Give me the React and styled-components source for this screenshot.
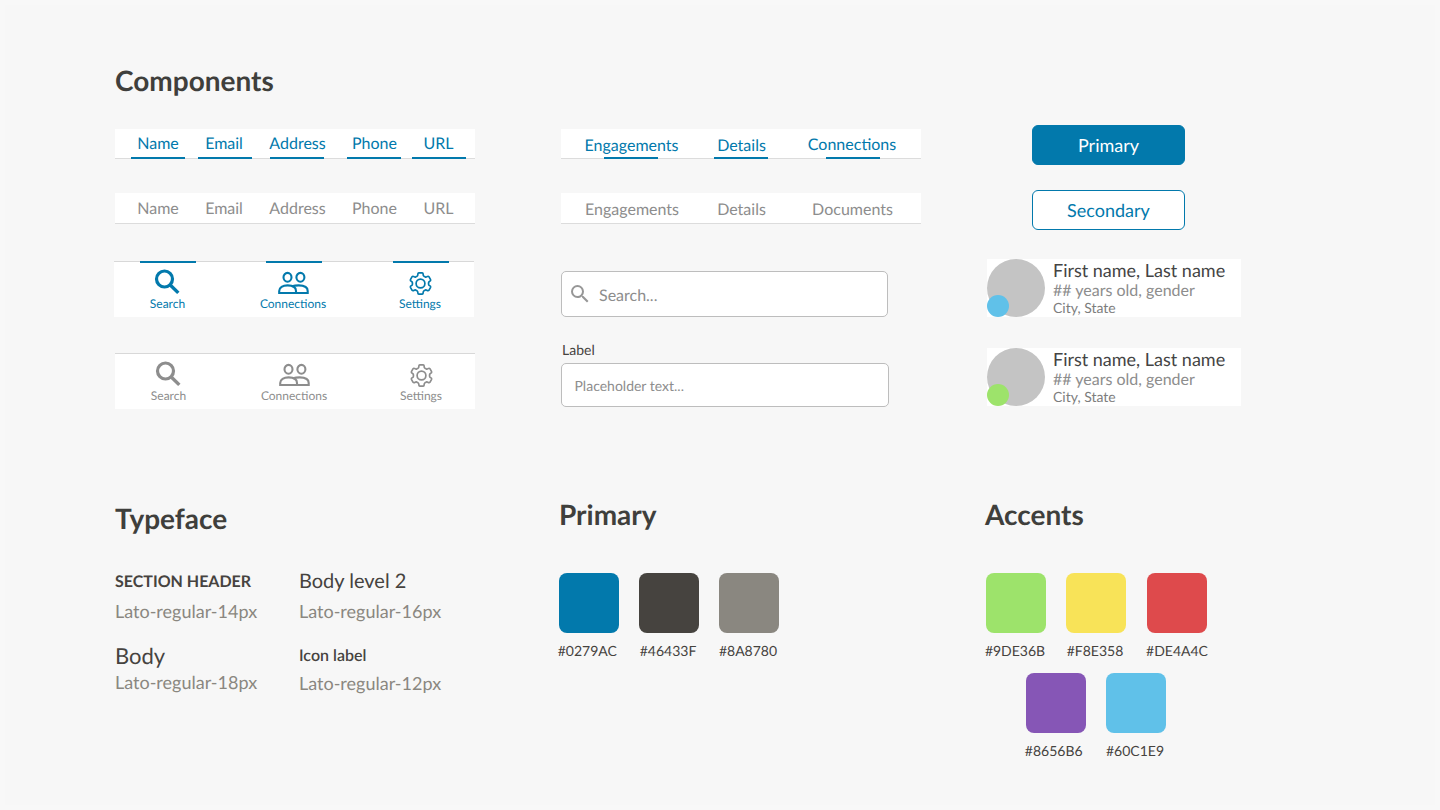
import React from 'react';
import styled, { createGlobalStyle } from 'styled-components';
import { MdSearch } from 'react-icons/md';

const BLUE = '#0279ac';
const DARK = '#46433f';
const INK = '#3f3f3c';
const WARM = '#8a8780';
const GREY = '#8d8d8d';

const Global = createGlobalStyle`
  *, *::before, *::after { box-sizing: border-box; }
  body {
    margin: 0;
    background: #f7f7f7;
    font-family: Lato, "Liberation Sans", sans-serif;
    text-rendering: geometricPrecision;
  }
`;

const Page = styled.main`
  width: 1440px;
  height: 810px;
  overflow: hidden;
  border: 5px solid #f8f8f8;
  background: #f7f7f7;
  padding: 57px 110px 0;
`;

const Heading = styled.h2`
  margin: 0 0 0 ${(p) => p.$outdent || 0}px;
  font-size: 28px;
  line-height: 36px;
  font-weight: 700;
  color: ${INK};
  white-space: nowrap;
  padding-top: ${(p) => p.$drop || 0}px;
`;

const Columns = styled.div`
  display: grid;
  grid-template-columns: 446px 426px 300px;
  align-items: start;
`;

const ComponentArea = styled(Columns)`
  height: 398px;
  padding-top: 27px;
`;

const Stack = styled.div`
  display: flex;
  flex-direction: column;
  align-items: flex-start;
  padding-top: ${(p) => p.$top || 0}px;
`;

const TabBar = styled.nav`
  display: flex;
  width: 360px;
  height: ${(p) => p.$height}px;
  margin-bottom: ${(p) => p.$after}px;
  padding-left: ${(p) => p.$inset}px;
  background: #fff;
  box-shadow: inset 0 -1px 0 #dcdcdc;
`;

const Tab = styled.a`
  display: flex;
  flex: none;
  justify-content: center;
  width: 54px;
  margin-left: ${(p) => p.$gap || 0}px;
  padding-top: ${(p) => p.$drop}px;
  padding-right: ${(p) => p.$trim || 0}px;
  padding-left: ${(p) => p.$lead || 0}px;
  border-bottom: 2px solid ${(p) => (p.$active ? BLUE : 'transparent')};
  color: ${(p) => (p.$active ? BLUE : GREY)};
  font-size: 16px;
  line-height: 20px;
  white-space: nowrap;
`;

const NavBar = styled.nav`
  display: flex;
  width: 360px;
  height: 56px;
  margin-left: ${(p) => p.$shift}px;
  margin-bottom: ${(p) => p.$after}px;
  padding-left: 26px;
  background: #fff;
  box-shadow: inset 0 1px 0 #d8d8d8;
`;

const NavItem = styled.a`
  display: flex;
  flex: none;
  flex-direction: column;
  align-items: center;
  width: 56px;
  margin-left: ${(p) => p.$gap || 0}px;
  padding-right: 2px;
  border-top: 2px solid ${(p) => (p.$active ? BLUE : 'transparent')};
  color: ${(p) => (p.$active ? BLUE : GREY)};
  font-size: 12px;
  line-height: 16px;
  white-space: nowrap;
`;

const IconSlot = styled.span`
  display: flex;
  align-items: flex-start;
  justify-content: center;
  height: 33px;
  padding-top: ${(p) => p.$drop || 0}px;
`;

const NavLabel = styled.span`
  padding-left: ${(p) => p.$lead || 0}px;
`;

const SearchBox = styled.div`
  display: flex;
  align-items: center;
  width: 327px;
  height: 46px;
  margin: 47px 0 23px;
  padding-left: 6px;
  border: 1px solid #bdbdbd;
  border-radius: 5px;
  background: #fff;
  color: ${GREY};
  font-size: 16px;
  line-height: 20px;
  svg { margin-right: 7px; color: #979797; }
`;

const SearchText = styled.span`
  padding-top: 4px;
`;

const FieldLabel = styled.label`
  padding-left: 1px;
  font-size: 14px;
  line-height: 20px;
  height: 23px;
  color: ${DARK};
`;

const Field = styled.div`
  display: flex;
  align-items: center;
  width: 328px;
  height: 44px;
  padding-left: 12.5px;
  border: 1px solid #bdbdbd;
  border-radius: 5px;
  background: #fff;
  color: ${GREY};
  font-size: 14px;
`;

const Button = styled.button`
  display: flex;
  align-items: center;
  justify-content: center;
  width: 153px;
  height: 40px;
  margin: 0 0 ${(p) => p.$after}px 45px;
  padding: 0;
  border: 1px solid ${BLUE};
  border-radius: 6px;
  background: ${(p) => (p.$filled ? BLUE : '#fff')};
  color: ${(p) => (p.$filled ? '#fff' : BLUE)};
  font: 18px/22px Lato, sans-serif;
  text-rendering: inherit;
`;

const Person = styled.article`
  display: flex;
  width: 254px;
  height: 58px;
  margin-bottom: 31px;
  background: #fff;
`;

const Avatar = styled.div`
  display: flex;
  align-items: flex-end;
  width: 58px;
  height: 58px;
  margin-right: 8px;
  border-radius: 50%;
  background: #c4c4c4;
`;

const Status = styled.span`
  width: 22px;
  height: 22px;
  border-radius: 50%;
  background: ${(p) => p.$color};
`;

const Details = styled.div`
  display: flex;
  flex-direction: column;
  white-space: nowrap;
`;

const PersonName = styled.span`
  font-size: 18px;
  line-height: 22px;
  color: #444;
`;
const PersonAge = styled.span`
  height: 18px;
  font-size: 16px;
  line-height: 20px;
  color: ${GREY};
`;
const PersonPlace = styled.span`
  font-size: 14px;
  line-height: 17px;
  color: #7d7d7d;
`;

const Specimens = styled.div`
  display: grid;
  grid-template-columns: 184px 184px;
  padding-top: 30px;
`;

const Sample = styled.div`
  height: ${(p) => p.$height || 30}px;
  padding-top: ${(p) => p.$drop || 0}px;
  font-size: ${(p) => p.$size}px;
  font-weight: ${(p) => p.$weight || 400};
  line-height: 30px;
  color: ${DARK};
  white-space: nowrap;
`;

const SampleNote = styled.div`
  height: ${(p) => p.$height}px;
  font-size: 18px;
  line-height: 30px;
  color: ${WARM};
  white-space: nowrap;
`;

const SwatchRow = styled.div`
  display: flex;
  gap: 20px;
  padding-top: ${(p) => p.$top || 0}px;
  padding-left: ${(p) => p.$left || 0}px;
`;

const Swatch = styled.figure`
  display: flex;
  flex-direction: column;
  align-items: center;
  width: 60px;
  height: 100px;
  margin: 0 0 0 ${(p) => p.$nudge || 0}px;
  font-size: 14px;
  line-height: 20px;
  color: ${DARK};
  white-space: nowrap;
`;

const SwatchName = styled.figcaption`
  padding-right: ${(p) => p.$trim}px;
`;

const Chip = styled.div`
  width: 60px;
  height: 60px;
  margin-bottom: 8px;
  border-radius: 8px;
  background: ${(p) => p.$color};
`;

const SearchIcon = () => (
  <svg width="26" height="26" viewBox="0 0 26 26" fill="none" stroke="currentColor" strokeWidth="3.2">
    <circle cx="10.5" cy="10" r="8" />
    <path d="M16 15.700l8.300 8.200" strokeWidth="3.400" />
  </svg>
);

const PeopleIcon = () => (
  <svg width="33" height="24" viewBox="0 0 33 24" fill="none" stroke="currentColor" strokeWidth="2.100">
    <ellipse cx="10.500" cy="6.300" rx="4" ry="4.400" />
    <ellipse cx="23.400" cy="6.300" rx="4" ry="4.400" />
    <path d="M2.200 22v-2c0-3.700 3.500-5.600 8.400-5.600s8.400 1.900 8.400 5.600v2z" />
    <path d="M15 15.200c2.200-.6 4.200-.8 6.700-.8 5.300 0 9 1.900 9 5.600v2H18" />
  </svg>
);

const polar = (radius, degrees) => {
  const a = (degrees * Math.PI) / 180;
  return `${(12.5 + radius * Math.sin(a)).toFixed(2)} ${(12.5 - radius * Math.cos(a)).toFixed(2)}`;
};

// Six rounded teeth, one pointing straight up.
const gearOutline =
  [0, 60, 120, 180, 240, 300]
    .map((t, i) =>
      [
        `${i ? 'L' : 'M'}${polar(8.1, t - 25)}`,
        `Q${polar(8.3, t - 19)} ${polar(9.2, t - 17)}`,
        `Q${polar(10.9, t - 15)} ${polar(10.8, t - 9)}`,
        `L${polar(10.8, t + 9)}`,
        `Q${polar(10.9, t + 15)} ${polar(9.2, t + 17)}`,
        `Q${polar(8.3, t + 19)} ${polar(8.1, t + 25)}`,
      ].join(''),
    )
    .join('') + 'Z';

const GearIcon = () => (
  <svg width="25" height="25" viewBox="0 0 25 25" fill="none" stroke="currentColor" strokeWidth="1.7" strokeLinejoin="round">
    <path d={gearOutline} />
    <circle cx="12.5" cy="12.5" r="4.4" />
  </svg>
);

function Navigation({ active, shift, after }) {
  return (
    <NavBar $shift={shift} $after={after}>
      <NavItem $active={active}><IconSlot $drop={6}><SearchIcon /></IconSlot><NavLabel $lead={1}>Search</NavLabel></NavItem>
      <NavItem $active={active} $gap={70}><IconSlot $drop={8}><PeopleIcon /></IconSlot><NavLabel>Connections</NavLabel></NavItem>
      <NavItem $active={active} $gap={71}><IconSlot $drop={8}><GearIcon /></IconSlot><NavLabel>Settings</NavLabel></NavItem>
    </NavBar>
  );
}

const contactTabs = [
  { label: 'Name', gap: 0 },
  { label: 'Email', gap: 13, trim: 2 },
  { label: 'Address', gap: 18, lead: 1 },
  { label: 'Phone', gap: 23, lead: 1 },
  { label: 'URL', gap: 11, trim: 1 },
];

function ContactTabs({ active, height, after, drop }) {
  return (
    <TabBar $height={height} $after={after} $inset={16}>
      {contactTabs.map(({ label, gap, trim, lead }) => (
        <Tab key={label} $active={active} $gap={gap} $trim={trim} $lead={lead} $drop={drop}>{label}</Tab>
      ))}
    </TabBar>
  );
}

function PersonCard({ color }) {
  return (
    <Person>
      <Avatar><Status $color={color} /></Avatar>
      <Details>
        <PersonName>First name, Last name</PersonName>
        <PersonAge>## years old, gender</PersonAge>
        <PersonPlace>City, State</PersonPlace>
      </Details>
    </Person>
  );
}

function ColorSwatch({ color, nudge, trim = 2 }) {
  return (
    <Swatch $nudge={nudge}>
      <Chip $color={color} />
      <SwatchName $trim={trim}>{color}</SwatchName>
    </Swatch>
  );
}

export default function App() {
  return (
    <>
      <Global />
      <Page>
        <Heading>Components</Heading>
        <ComponentArea>
          <Stack $top={4}>
            <ContactTabs active height={30} after={34} drop={5} />
            <ContactTabs height={31} after={37} drop={6} />
            <Navigation active shift={-1} after={36} />
            <Navigation shift={0} after={0} />
          </Stack>
          <Stack $top={4}>
            <TabBar $height={30} $after={34} $inset={43}>
              <Tab $active $drop={7} $lead={1}>Engagements</Tab>
              <Tab $active $drop={7} $gap={56} $lead={1}>Details</Tab>
              <Tab $active $drop={6} $gap={58} $trim={2}>Connections</Tab>
            </TabBar>
            <TabBar $height={31} $after={0} $inset={44}>
              <Tab $drop={7}>Engagements</Tab>
              <Tab $drop={7} $gap={55} $lead={1}>Details</Tab>
              <Tab $drop={7} $gap={57} $lead={1}>Documents</Tab>
            </TabBar>
            <SearchBox><MdSearch size={24} /><SearchText>Search...</SearchText></SearchBox>
            <FieldLabel>Label</FieldLabel>
            <Field>Placeholder text...</Field>
          </Stack>
          <Stack>
            <Button $filled $after={25}>Primary</Button>
            <Button $after={29}>Secondary</Button>
            <PersonCard color="#60C1E9" />
            <PersonCard color="#9DE36B" />
          </Stack>
        </ComponentArea>
        <Columns>
          <section>
            <Heading $drop={4}>Typeface</Heading>
            <Specimens>
              <div>
                <Sample $size={16} $weight={700} $drop={1}>SECTION HEADER</Sample>
                <SampleNote $height={45}>Lato-regular-14px</SampleNote>
                <Sample $size={22} $height={26}>Body</Sample>
                <SampleNote $height={30}>Lato-regular-18px</SampleNote>
              </div>
              <div>
                <Sample $size={20}>Body level 2</Sample>
                <SampleNote $height={44}>Lato-regular-16px</SampleNote>
                <Sample $size={16} $weight={600} $height={28} $drop={1}>Icon label</Sample>
                <SampleNote $height={30}>Lato-regular-12px</SampleNote>
              </div>
            </Specimens>
          </section>
          <section>
            <Heading $outdent={-2}>Primary</Heading>
            <SwatchRow $top={41}>
              <ColorSwatch color="#0279AC" nudge={-2} trim={3.5} />
              <ColorSwatch color="#46433F" />
              <ColorSwatch color="#8A8780" />
            </SwatchRow>
          </section>
          <section>
            <Heading $outdent={-2}>Accents</Heading>
            <SwatchRow $top={41}>
              <ColorSwatch color="#9DE36B" nudge={-1} />
              <ColorSwatch color="#F8E358" />
              <ColorSwatch color="#DE4A4C" nudge={1} trim={0} />
            </SwatchRow>
            <SwatchRow $left={39}>
              <ColorSwatch color="#8656B6" trim={4.5} />
              <ColorSwatch color="#60C1E9" />
            </SwatchRow>
          </section>
        </Columns>
      </Page>
    </>
  );
}
